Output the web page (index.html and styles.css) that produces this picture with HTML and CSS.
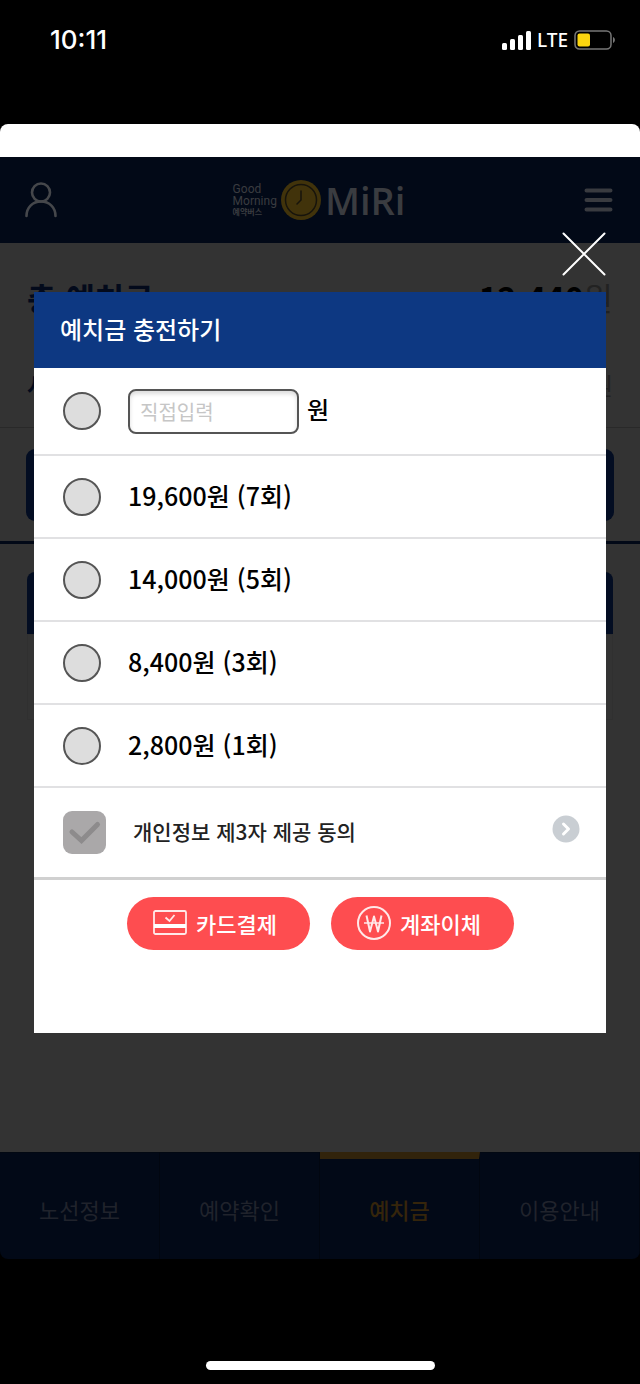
FILE: index.html
```html
<!DOCTYPE html>
<html lang="ko">
<head>
<meta charset="utf-8">
<meta name="viewport" content="width=device-width, initial-scale=1">
<title>예치금 충전하기</title>
<link rel="stylesheet" href="styles.css">
</head>
<body>
<div class="statusbar">
  <span class="time">10:11</span>
  <div class="indicators">
    <svg width="29" height="19" viewBox="0 0 29 19" fill="#fff" aria-hidden="true"><rect x="0" y="12" width="5" height="7" rx="1.5"/><rect x="8" y="8" width="5" height="11" rx="1.5"/><rect x="16" y="4" width="5" height="15" rx="1.5"/><rect x="24" y="0" width="5" height="19" rx="1.5"/></svg>
    <span class="network">LTE</span>
    <svg width="42" height="20" viewBox="0 0 42 20" aria-hidden="true"><rect x="1" y="1" width="36" height="18" rx="4.500" fill="none" stroke="#777" stroke-width="1.500"/><rect x="3.500" y="3.500" width="12.500" height="13" rx="2" fill="#fbd50f"/><path d="M39 7c2.500 1 2.500 5 0 6z" fill="#777"/></svg>
  </div>
</div>

<div class="app">
  <div class="app-top"></div>
  <header class="app-header">
    <button class="icon-button" aria-label="내 정보"><svg width="32" height="36" viewBox="0 0 32 36" fill="none" stroke="#45474b" stroke-width="2.600" stroke-linecap="round"><circle cx="16" cy="10.500" r="9"/><path d="M1.500 34c0-8.500 6-14.500 14.500-14.500S30.500 25.500 30.500 34"/></svg></button>
    <div class="logo">
      <div class="logo-tagline"><span>Good</span><span>Morning</span><span class="logo-sub">예약버스</span></div>
      <svg width="40" height="40" viewBox="0 0 40 40" fill="none" aria-hidden="true"><circle cx="20" cy="20" r="20" fill="#41330b"/><circle cx="20" cy="20" r="15.500" stroke="#17140c" stroke-width="1.500"/><path d="M20 11v9l-4 4" stroke="#17140c" stroke-width="1.500" stroke-linecap="round" stroke-linejoin="round"/></svg>
      <span class="logo-name">MiRi</span>
    </div>
    <button class="icon-button menu-button" aria-label="메뉴"><svg width="29" height="24" viewBox="0 0 29 24" stroke="#393b40" stroke-width="4" stroke-linecap="round"><path d="M2.500 2.500h24M2.500 12h24M2.500 21.500h24"/></svg></button>
  </header>

  <main class="page">
    <section class="summary">
      <div class="balance"><strong class="balance-label">총 예치금</strong><span class="balance-amount"><b>12,440</b>원</span></div>
      <div class="balance balance-small"><strong>사용</strong><span>원</span></div>
    </section>
    <section class="charge"><button class="charge-button" aria-label="예치금 충전"></button></section>
    <section class="history"><div class="history-head"></div><div class="history-body"></div></section>
  </main>

  <nav class="tabs">
    <a class="tab" href="#route">노선정보</a>
    <a class="tab" href="#booking">예약확인</a>
    <a class="tab tab-active" href="#deposit">예치금</a>
    <a class="tab" href="#guide">이용안내</a>
  </nav>

  <div class="modal">
    <button class="close" aria-label="닫기"><svg width="44" height="44" viewBox="0 0 44 44" stroke="#fff" stroke-width="2" stroke-linecap="round"><path d="M1.500 1.500l41 41M42.500 1.500l-41 41"/></svg></button>
    <form class="dialog" role="dialog" aria-labelledby="dialog-title">
      <h1 class="dialog-title" id="dialog-title">예치금 충전하기</h1>
      <div class="option option-custom">
        <input class="radio" type="radio" name="amount" id="custom" aria-label="직접입력">
        <div class="amount-field">
          <input class="amount-input" type="text" placeholder="직접입력" aria-label="충전 금액">
          <label class="option-text" for="custom">원</label>
        </div>
      </div>
      <label class="option"><input class="radio" type="radio" name="amount"><span class="option-text">19,600원 (7회)</span></label>
      <label class="option"><input class="radio" type="radio" name="amount"><span class="option-text">14,000원 (5회)</span></label>
      <label class="option"><input class="radio" type="radio" name="amount"><span class="option-text">8,400원 (3회)</span></label>
      <label class="option"><input class="radio" type="radio" name="amount"><span class="option-text">2,800원 (1회)</span></label>
      <div class="agreement">
        <span class="checkbox-wrap">
          <input class="checkbox" type="checkbox" id="agree">
          <svg class="checkmark" width="43" height="43" viewBox="0 0 43 43" fill="none" stroke="#8d8b8c" stroke-width="5" aria-hidden="true"><path d="M9 21l9.500 8.500L34.500 13.500" stroke-linecap="round"/></svg>
        </span>
        <label class="agreement-label" for="agree">개인정보 제3자 제공 동의</label>
        <button class="detail" type="button" aria-label="자세히 보기"><svg width="28" height="28" viewBox="0 0 28 28" fill="none"><circle cx="14" cy="14" r="13.500" fill="#c9ced3"/><path d="M11.500 9l5 5-5 5" stroke="#fff" stroke-width="3" stroke-linecap="round" stroke-linejoin="round"/></svg></button>
      </div>
      <div class="actions">
        <button class="pay" type="button"><svg width="34" height="36" viewBox="0 0 34 36" fill="none" stroke="#ffe9e9"><rect x="1" y="6" width="32" height="23" rx="1.500" stroke-width="1.800"/><path d="M1 21h32" stroke="#fff" stroke-width="4"/><path d="M12.500 12.500l4 3.500 5-6" stroke-width="1.800"/></svg>카드결제</button>
        <button class="pay" type="button"><svg width="34" height="36" viewBox="0 0 34 36" fill="none" stroke="#ffe9e9" stroke-width="2"><circle cx="17" cy="18" r="16"/><path d="M9.500 10.500l3.500 16 4-15 4 15 3.500-16" stroke-linejoin="round" stroke-width="2"/><path d="M7 18h20" stroke-width="1.500"/></svg>계좌이체</button>
      </div>
    </form>
  </div>
</div>

<div class="home-area"><div class="home-indicator"></div></div>
</body>
</html>
```

FILE: styles.css
```css
* { box-sizing: border-box; }
body {
  margin: 0;
  min-height: 100vh;
  display: flex;
  flex-direction: column;
  background: #000;
  font-family: "Noto Sans CJK KR", "Noto Sans", sans-serif;
}
button { padding: 0; border: 0; background: none; font: inherit; color: inherit; }
svg { display: block; flex: none; }

.statusbar {
  height: 124px;
  padding: 24px 24px 0 50px;
  display: flex;
  justify-content: space-between;
  align-items: flex-start;
  color: #fff;
}
.time { font: 500 26px/32px Inter, sans-serif; }
.indicators { display: flex; align-items: center; gap: 6px; height: 32px; }
.network { font: 500 19px/32px "Noto Sans", sans-serif; }

.app {
  position: relative;
  flex: 1;
  display: flex;
  flex-direction: column;
  border-radius: 8px;
  overflow: hidden;
}
.app-top { height: 33px; background: #fff; }
.app-header {
  height: 86px;
  padding: 0 27px 0 25px;
  display: grid;
  grid-template-columns: 1fr auto 1fr;
  align-items: center;
  background: #020917;
}
.icon-button { justify-self: start; }
.menu-button { justify-self: end; }
.logo { display: flex; align-items: center; gap: 4px; color: #3a3c40; }
.logo-tagline {
  display: flex;
  flex-direction: column;
  font: 12px/12px Roboto, sans-serif;
}
.logo-sub { font: 700 8px/10px "Noto Sans CJK KR", sans-serif; }
.logo-name { font: 600 38px/40px "Open Sans", sans-serif; }

.page { flex: 1; background: #333; }
.summary {
  height: 185px;
  padding: 34px 27px 0;
  border-bottom: 1px solid #292929;
}
.balance {
  display: flex;
  justify-content: space-between;
  height: 88px;
  font-size: 32px;
  line-height: 40px;
  color: #222;
}
.balance-label { color: #030a1b; }
.balance-amount b { color: #000; }
.balance-small { font-size: 24px; }
.balance-small strong { color: #030a1b; }
.charge { padding: 21px 26px 20px; border-bottom: 3px solid #020917; }
.charge-button {
  display: block;
  width: 100%;
  height: 72px;
  border-radius: 9px;
  background: #030d22;
}
.history { padding: 28px 27px 0; }
.history-head { height: 62px; border-radius: 8px 8px 0 0; background: #030d22; }
.history-body { height: 86px; border: 1px solid #303030; }

.tabs {
  height: 107px;
  display: grid;
  grid-template-columns: repeat(4, 1fr);
  background: #020917;
}
.tab {
  display: flex;
  justify-content: center;
  align-items: center;
  padding-top: 6px;
  border-top: 1px solid #020812;
  border-right: 1px solid #010610;
  font-size: 22px;
  line-height: 32px;
  color: #20232c;
  text-decoration: none;
}
.tab-active {
  padding-top: 0;
  border-top: 7px solid #31230b;
  color: #35250b;
  font-weight: 500;
}

.modal { position: absolute; top: 108px; left: 34px; right: 34px; }
.close { display: block; margin: 0 0 16px auto; }
.dialog { background: #fff; padding-bottom: 83px; }
.dialog-title {
  margin: 0;
  padding: 19px 26px 21px;
  background: #0d3882;
  color: #fff;
  font-size: 24px;
  line-height: 36px;
  font-weight: 500;
}
.option {
  display: flex;
  align-items: center;
  gap: 27px;
  min-height: 83px;
  padding: 0 29px;
  border-bottom: 2px solid #e1e1e3;
  color: #000;
  font-size: 25px;
  line-height: 36px;
  font-weight: 500;
}
.option-custom { min-height: 88px; font-size: 24px; }
.option-text { padding-bottom: 4px; }
.amount-field { display: flex; align-items: center; gap: 8px; }
.radio {
  appearance: none;
  flex: none;
  width: 38px;
  height: 38px;
  margin: 0;
  border: 2px solid #555;
  border-radius: 50%;
  background: #ddd;
}
.radio:checked { background: #0d3882; }
.amount-input {
  width: 171px;
  height: 45px;
  padding: 0 10px;
  border: 2px solid #555;
  border-radius: 8px;
  background: #fff;
  box-shadow: inset 0 3px 4px #ddd;
  font: 20px/30px "Noto Sans CJK KR", sans-serif;
}
.amount-input::placeholder { color: #c6c6c6; opacity: 1; }
.agreement {
  display: flex;
  align-items: center;
  min-height: 92px;
  padding: 0 26px 0 29px;
  border-bottom: 3px solid #d0d0d0;
}
.checkbox-wrap { position: relative; width: 43px; height: 43px; }
.checkbox {
  appearance: none;
  display: block;
  width: 43px;
  height: 43px;
  margin: 0;
  border-radius: 9px;
  background: #aaa8a9;
}
.checkmark { position: absolute; inset: 0; pointer-events: none; }
.agreement-label {
  flex: 1;
  padding: 0 0 4px 27px;
  color: #222;
  font-size: 21px;
  line-height: 32px;
  font-weight: 500;
}
.detail { margin-bottom: 8px; }
.actions {
  display: flex;
  justify-content: center;
  gap: 21px;
  padding-top: 17px;
}
.pay {
  display: flex;
  justify-content: center;
  align-items: center;
  gap: 9px;
  width: 183px;
  height: 53px;
  padding: 0 6px 2px 0;
  border-radius: 27px;
  background: #fe4d50;
  color: #fff;
  font-size: 22px;
  line-height: 32px;
  font-weight: 500;
}

.home-area {
  height: 125px;
  padding-bottom: 14px;
  display: flex;
  justify-content: center;
  align-items: flex-end;
}
.home-indicator { width: 229px; height: 9px; border-radius: 5px; background: #fff; }
```
